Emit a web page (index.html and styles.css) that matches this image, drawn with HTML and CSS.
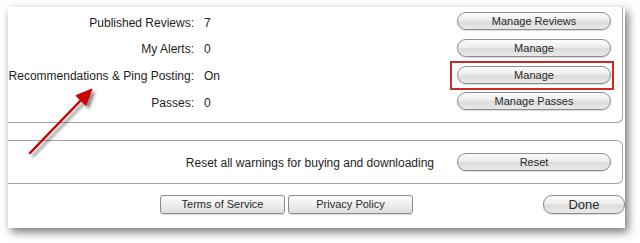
FILE: index.html
```html
<!DOCTYPE html>
<html lang="en">
  <head>
    <meta charset="UTF-8" />
    <title>Account Settings</title>
    <link rel="stylesheet" href="styles.css">
  </head>
  <body>
    <div class="window">
      <div class="group top-group">
        <div class="row">
          <span class="label">Published Reviews:</span>
          <span class="value">7</span>
          <button class="pill">Manage Reviews</button>
        </div>
        <div class="row">
          <span class="label">My Alerts:</span>
          <span class="value">0</span>
          <button class="pill">Manage</button>
        </div>
        <div class="row">
          <span class="label">Recommendations &amp; Ping Posting:</span>
          <span class="value">On</span>
          <span class="marked">
            <button class="pill">Manage</button>
          </span>
        </div>
        <div class="row">
          <span class="label">Passes:</span>
          <span class="value">0</span>
          <button class="pill">Manage Passes</button>
        </div>
      </div>

      <div class="group reset-group">
        <span class="reset-text">Reset all warnings for buying and downloading</span>
        <button class="pill">Reset</button>
      </div>

      <div class="footer">
        <button class="square">Terms of Service</button>
        <button class="square">Privacy Policy</button>
        <button class="pill done">Done</button>
      </div>

      <svg class="arrow" width="120" height="180" viewBox="0 0 120 180">
        <defs>
          <filter id="soft" x="-20%" y="-20%" width="140%" height="140%">
            <feDropShadow dx="3" dy="3" stdDeviation="1.5" flood-color="#000" flood-opacity="0.45" />
          </filter>
        </defs>
        <g filter="url(#soft)" fill="#cc0000" stroke="#cc0000">
          <line x1="22" y1="146" x2="76" y2="90" stroke-width="2.5" stroke-linecap="round" />
          <polygon points="84,82 77.9,98.4 67.9,88.6" stroke-width="1" stroke-linejoin="round" />
        </g>
      </svg>
    </div>
  </body>
</html>
```

FILE: styles.css
```css
body {
  margin: 0;
  background-color: #ffffff;
  font-family: "Liberation Sans", Arial, sans-serif;
  color: #1e1e1e;
}

.window {
  position: relative;
  margin: 7px 15px 15px 8px;
  width: 617px;
  height: 221px;
  background-color: #ffffff;
  box-shadow: 3px 4px 9px rgba(0, 0, 0, 0.55);
  overflow: hidden;
  display: flex;
  flex-direction: column;
}

.group {
  border: 1px solid #a3a3a3;
  border-left: none;
  margin-right: 2px;
  border-radius: 0 6px 6px 0;
}

.top-group {
  border-top: none;
  border-radius: 0 0 6px 0;
  padding: 1px 11px 7px 0;
  height: 107px;
}

.row {
  height: 26.67px;
  display: flex;
  align-items: center;
  font-size: 12px;
  white-space: nowrap;
}

.label {
  width: 186px;
  flex-shrink: 0;
  text-align: right;
  padding-top: 3px;
}

.value {
  margin-left: 10px;
  padding-top: 3px;
}

.row > .pill,
.row > .marked {
  margin-left: auto;
}

.pill {
  width: 154px;
  height: 18px;
  padding: 0;
  border: 1px solid #8c8c8c;
  border-radius: 9px;
  background: linear-gradient(#fdfdfd, #ededed 45%, #dcdcdc 55%, #e9e9e9);
  box-shadow: 0 1px 1px rgba(0, 0, 0, 0.15);
  font-family: "Liberation Sans", Arial, sans-serif;
  font-size: 11px;
  color: #2a2a2a;
  cursor: pointer;
}

.marked {
  position: relative;
  display: flex;
}

.marked::after {
  content: "";
  position: absolute;
  top: -5px;
  left: -7px;
  right: -3px;
  bottom: -6px;
  border: 2px solid #c92a2a;
}

.reset-group {
  margin-top: 17px;
  height: 42px;
  display: flex;
  align-items: center;
  justify-content: flex-end;
  padding-right: 11px;
  font-size: 12px;
  white-space: nowrap;
}

.reset-text {
  margin-right: 23px;
  padding-top: 2px;
}

.footer {
  flex: 1;
  display: flex;
  align-items: center;
  padding-left: 152px;
  padding-bottom: 4px;
  gap: 3px;
}

.square {
  width: 125px;
  height: 19px;
  padding: 0;
  border: 1px solid #8c8c8c;
  border-radius: 3px;
  background: linear-gradient(#fdfdfd, #eeeeee 50%, #dedede);
  box-shadow: 0 1px 1px rgba(0, 0, 0, 0.15);
  font-family: "Liberation Sans", Arial, sans-serif;
  font-size: 11px;
  color: #2a2a2a;
  cursor: pointer;
}

.pill.done {
  width: 82px;
  height: 19px;
  margin-left: auto;
  font-size: 13px;
}

.arrow {
  position: absolute;
  left: 0;
  top: 0;
}
```
